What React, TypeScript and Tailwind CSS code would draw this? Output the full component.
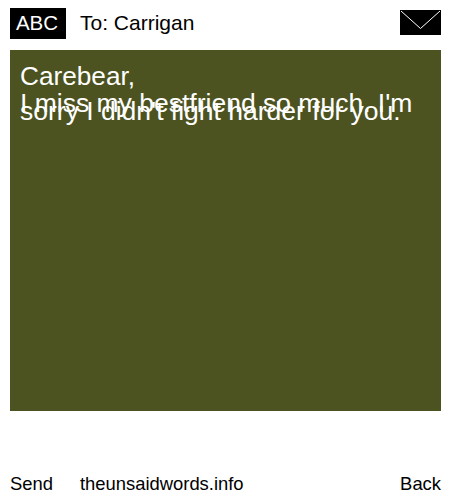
const font = "font-['Liberation_Sans',Arial,sans-serif]";

function Envelope() {
  return (
    <svg width="41" height="25" viewBox="0 0 41 25" className="block" shapeRendering="crispEdges">
      <rect width="41" height="25" fill="#000" />
      <path d="M1 1 L20.5 18.5 L40 1" fill="none" stroke="#fff" strokeWidth="1" shapeRendering="auto" />
    </svg>
  );
}

export default function App() {
  return (
    <div className={`${font} w-[450px] h-[500px] bg-white text-black flex flex-col overflow-hidden`}>
      <header className="flex items-start h-[50px] pl-[10px] pr-[9px] pt-[8px]">
        <div className="bg-black text-white text-[20.5px] leading-[30px] h-[31px] w-[56px] pr-[2px] text-center">ABC</div>
        <div className="ml-[14px] text-[21px] leading-[30px]">To: Carrigan</div>
        <div className="ml-auto pt-[2px]">
          <Envelope />
        </div>
      </header>

      <main className="ml-[10px] w-[431px] h-[361px] bg-[#4d5320] text-white text-[26.5px] px-[10px] pt-[11px]">
        <div className="leading-[30px] text-[26.2px]">Carebear,</div>
        <div className="leading-[22px] mt-[1px]">
          I miss my bestfriend so much. I'm
        </div>
        <div className="leading-[22px] -mt-[14px]">sorry I didn't fight harder for you.</div>
      </main>

      <footer className="flex items-center mt-[61px] pl-[10px] pr-[9px] text-[18.4px] leading-[24px]">
        <span className="w-[70px]">Send</span>
        <span>theunsaidwords.info</span>
        <span className="ml-auto">Back</span>
      </footer>
    </div>
  );
}
